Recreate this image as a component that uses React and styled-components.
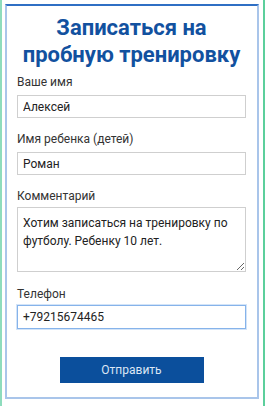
import React from "react";
import styled, { createGlobalStyle } from "styled-components";

const GlobalStyle = createGlobalStyle`
  body {
    margin: 0;
    background: #ffffff;
    font-family: Roboto, "Noto Sans", sans-serif;
  }
`;

const Page = styled.div`
  box-sizing: border-box;
  width: 265px;
  height: 406px;
  padding: 4px 4px 0 3px;
  border-left: 2px solid #8edcbd;
  border-right: 2px solid #5ccf9c;
  background: #ffffff;
`;

const Card = styled.form`
  box-sizing: border-box;
  width: 254px;
  height: 395px;
  padding: 8px 11px 0 10px;
  border: 2px solid #a9c5ea;
  border-top-color: #2f6fc4;
  display: flex;
  flex-direction: column;
`;

const Title = styled.h2`
  margin: 0 0 7px;
  font-size: 22px;
  line-height: 27px;
  font-weight: 700;
  text-align: center;
  color: #12519f;
`;

const Field = styled.div`
  display: flex;
  flex-direction: column;
  margin-bottom: ${p => p.$gap || 14}px;
`;

const Label = styled.label`
  font-size: 12px;
  line-height: 14px;
  color: #333333;
  margin-bottom: ${p => p.$gap || 5}px;
`;

const Input = styled.input`
  box-sizing: border-box;
  width: 100%;
  height: ${p => (p.$focused ? 24 : 23)}px;
  padding: 0 5px;
  border: 1px solid ${p => (p.$focused ? "#86b3ea" : "#cfcfcf")};
  box-shadow: ${p => (p.$focused ? "0 0 0 1px #d3e4f8" : "none")};
  border-radius: 0;
  font-family: inherit;
  font-size: 12px;
  color: #222222;
  outline: none;
  background: #ffffff;
`;

const TextArea = styled.textarea`
  box-sizing: border-box;
  width: 100%;
  height: 65px;
  padding: 6px 5px;
  border: 1px solid #cfcfcf;
  border-radius: 0;
  font-family: inherit;
  font-size: 12px;
  line-height: 18px;
  color: #222222;
  outline: none;
  resize: vertical;
`;

const Actions = styled.div`
  display: flex;
  justify-content: center;
  margin-top: 14px;
`;

const SubmitButton = styled.button`
  width: 144px;
  height: 26px;
  border: none;
  background: #0b4f9c;
  color: #dbe6f4;
  font-family: inherit;
  font-size: 12px;
  cursor: pointer;
`;

export default function App() {
  return (
    <>
      <GlobalStyle />
      <Page>
        <Card onSubmit={e => e.preventDefault()}>
          <Title>
            Записаться на
            <br />
            пробную тренировку
          </Title>
          <Field>
            <Label $gap={6}>Ваше имя</Label>
            <Input defaultValue="Алексей" />
          </Field>
          <Field>
            <Label $gap={6}>Имя ребенка (детей)</Label>
            <Input defaultValue="Роман" />
          </Field>
          <Field $gap={15}>
            <Label $gap={4}>Комментарий</Label>
            <TextArea defaultValue="Хотим записаться на тренировку по футболу. Ребенку 10 лет." />
          </Field>
          <Field $gap={0}>
            <Label $gap={4}>Телефон</Label>
            <Input $focused defaultValue="+79215674465" />
          </Field>
          <Actions>
            <SubmitButton type="submit">Отправить</SubmitButton>
          </Actions>
        </Card>
      </Page>
    </>
  );
}
